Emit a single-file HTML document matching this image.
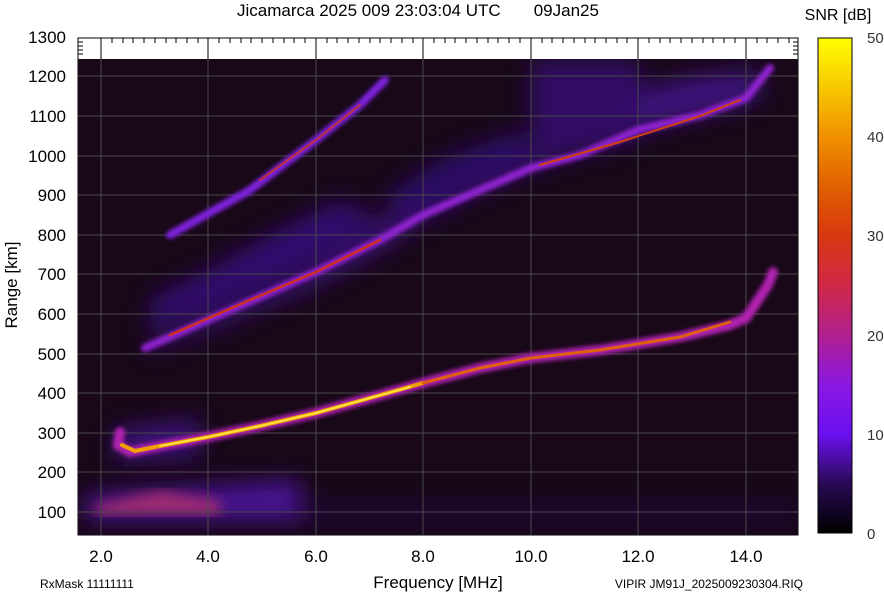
<!DOCTYPE html>
<html><head><meta charset="utf-8"><style>
body{margin:0;background:#fff;width:884px;height:595px;overflow:hidden;font-family:"Liberation Sans",Arial,sans-serif}
</style></head><body>
<svg width="884" height="595" xmlns="http://www.w3.org/2000/svg" font-family="Liberation Sans, Arial, sans-serif">
<defs>
<linearGradient id="cb" x1="0" y1="1" x2="0" y2="0">
<stop offset="0" stop-color="#000"/>
<stop offset="0.1" stop-color="#2a0a55"/>
<stop offset="0.2" stop-color="#6a10f0"/>
<stop offset="0.3" stop-color="#8a18e0"/>
<stop offset="0.4" stop-color="#b02090"/>
<stop offset="0.5" stop-color="#d02848"/>
<stop offset="0.6" stop-color="#d83810"/>
<stop offset="0.7" stop-color="#e06000"/>
<stop offset="0.8" stop-color="#f09000"/>
<stop offset="0.9" stop-color="#f8c800"/>
<stop offset="1" stop-color="#ffff00"/>
</linearGradient>
<filter id="b2"><feGaussianBlur stdDeviation="2"/></filter>
<filter id="b6"><feGaussianBlur stdDeviation="6"/></filter>
<filter id="b12"><feGaussianBlur stdDeviation="12"/></filter>
<clipPath id="pc"><rect x="78" y="59" width="720" height="476"/></clipPath>
</defs>
<text x="418" y="16" font-size="17" text-anchor="middle">Jicamarca 2025 009 23:03:04 UTC&#160;&#160;&#160;&#160;&#160;&#160;&#160;09Jan25</text>
<text x="838" y="20" font-size="16" text-anchor="middle">SNR [dB]</text>
<rect x="78" y="38" width="720" height="497" fill="#fff" stroke="#000"/>
<g clip-path="url(#pc)">
<rect x="78" y="59" width="720" height="476" fill="#180818"/>
<g filter="url(#b12)" opacity="0.75">
<path d="M145 345 L208 318 L316 268 L380 225 L423 190 L480 170 L531 150 L600 120 L640 90 L700 75 L760 70 L760 100 L700 115 L640 130 L580 150 L531 170 L480 190 L423 220 L380 250 L316 285 L208 330 L150 352Z" fill="#4a12a0"/>
<path d="M150 300 L208 270 L280 230 L340 200 L380 220 L316 260 L208 310 L150 330Z" fill="#3a1090"/>
<path d="M380 200 L440 160 L520 130 L531 160 L480 180 L420 215Z" fill="#300c80"/>
<path d="M85 495 L300 480 L300 520 L85 520Z" fill="#5a18c0"/>
<path d="M531 60 L640 60 L640 140 L531 165Z" fill="#3a1080"/>
<path d="M300 505 L798 505 L798 520 L300 520Z" fill="#2a0a60" opacity="0.7"/>
<path d="M115 430 L200 420 L200 455 L115 460Z" fill="#4a12a0"/>
</g>
<g filter="url(#b6)">
<path d="M95 505 L160 490 L220 500 L220 515 L95 515Z" fill="#b03070" opacity="0.8"/>
</g>
<g stroke="#4a4a4a" stroke-width="1">
<line x1="101" y1="38" x2="101" y2="535"/><line x1="208" y1="38" x2="208" y2="535"/><line x1="316" y1="38" x2="316" y2="535"/><line x1="423" y1="38" x2="423" y2="535"/><line x1="531" y1="38" x2="531" y2="535"/><line x1="638" y1="38" x2="638" y2="535"/><line x1="746" y1="38" x2="746" y2="535"/>
<line x1="78" y1="76" x2="798" y2="76"/><line x1="78" y1="116" x2="798" y2="116"/><line x1="78" y1="156" x2="798" y2="156"/><line x1="78" y1="195" x2="798" y2="195"/><line x1="78" y1="235" x2="798" y2="235"/><line x1="78" y1="274" x2="798" y2="274"/><line x1="78" y1="314" x2="798" y2="314"/><line x1="78" y1="354" x2="798" y2="354"/><line x1="78" y1="393" x2="798" y2="393"/><line x1="78" y1="433" x2="798" y2="433"/><line x1="78" y1="472" x2="798" y2="472"/><line x1="78" y1="512" x2="798" y2="512"/>
</g>
<g fill="none" stroke-linecap="round">
<path d="M170 235 L250 190 L316 140 L360 105 L385 80" stroke="#8020e0" stroke-width="8" filter="url(#b2)"/>
<path d="M260 180 L316 140 L360 105" stroke="#c03040" stroke-width="2"/>
<path d="M145 348 L208 320 L316 272 L380 240 L423 215 L480 190 L531 168 L580 155 L638 130 L700 115 L746 98 L770 68" stroke="#9020d0" stroke-width="8" filter="url(#b2)"/>
<path d="M170 335 L250 300 L316 272 L380 240" stroke="#d03020" stroke-width="2.5"/>
<path d="M540 165 L620 142 L700 116 L740 100" stroke="#d04010" stroke-width="2"/>
<path d="M120 432 L118 445 L130 452 L160 446 L208 437 L260 426 L316 413 L370 398 L423 383 L480 368 L531 358 L600 350 L680 337 L730 325 L746 318 L758 300 L768 285 L773 272" stroke="#b020b0" stroke-width="10" filter="url(#b2)"/>
<path d="M122 445 L135 451 L160 446 L208 437 L260 426 L316 413 L370 398 L423 383" stroke="#f0a000" stroke-width="4"/>
<path d="M160 446 L208 437 L260 426 L316 413 L370 398 L410 387" stroke="#ffe040" stroke-width="2"/>
<path d="M423 383 L480 368 L531 358 L600 350 L680 337 L730 322" stroke="#e06010" stroke-width="3"/>
</g>
</g>
<g stroke="#000" stroke-width="1">
<path d="M101 38V59M208 38V59M316 38V59M423 38V59M531 38V59M638 38V59M746 38V59"/>
<path d="M112 38v5M123 38v5M133 38v5M144 38v5M155 38v5M166 38v5M176 38v5M187 38v5M198 38v5M219 38v5M230 38v5M241 38v5M251 38v5M262 38v5M273 38v5M284 38v5M294 38v5M305 38v5M327 38v5M337 38v5M348 38v5M359 38v5M370 38v5M380 38v5M391 38v5M402 38v5M413 38v5M434 38v5M445 38v5M455 38v5M466 38v5M477 38v5M488 38v5M498 38v5M509 38v5M520 38v5M542 38v5M552 38v5M563 38v5M574 38v5M585 38v5M595 38v5M606 38v5M617 38v5M627 38v5M649 38v5M660 38v5M670 38v5M681 38v5M692 38v5M703 38v5M713 38v5M724 38v5M735 38v5M757 38v5M767 38v5M778 38v5M789 38v5"/>
<path d="M78 42h5M78 46h5M78 50h5M78 54h5M798 42h-5M798 46h-5M798 50h-5M798 54h-5"/>
</g>
<g font-size="17" text-anchor="end">
<text x="66" y="43">1300</text><text x="66" y="82">1200</text><text x="66" y="122">1100</text><text x="66" y="162">1000</text><text x="66" y="201">900</text><text x="66" y="241">800</text><text x="66" y="280">700</text><text x="66" y="320">600</text><text x="66" y="360">500</text><text x="66" y="399">400</text><text x="66" y="439">300</text><text x="66" y="478">200</text><text x="66" y="518">100</text>
</g>
<g font-size="17" text-anchor="middle">
<text x="101" y="562">2.0</text><text x="208" y="562">4.0</text><text x="316" y="562">6.0</text><text x="423" y="562">8.0</text><text x="531" y="562">10.0</text><text x="638" y="562">12.0</text><text x="746" y="562">14.0</text>
<text x="438" y="588">Frequency [MHz]</text>
<text transform="translate(17,285) rotate(-90)">Range [km]</text>
</g>
<text x="40" y="588" font-size="12">RxMask 11111111</text>
<text x="803" y="588" font-size="12" text-anchor="end">VIPIR  JM91J_2025009230304.RIQ</text>
<rect x="818" y="38" width="34" height="495" fill="url(#cb)" stroke="#000"/>
<g font-size="15" fill="#333">
<text x="867" y="43">50</text><text x="867" y="142">40</text><text x="867" y="241">30</text><text x="867" y="341">20</text><text x="867" y="440">10</text><text x="867" y="539">0</text>
</g>
</svg>
</body></html>
